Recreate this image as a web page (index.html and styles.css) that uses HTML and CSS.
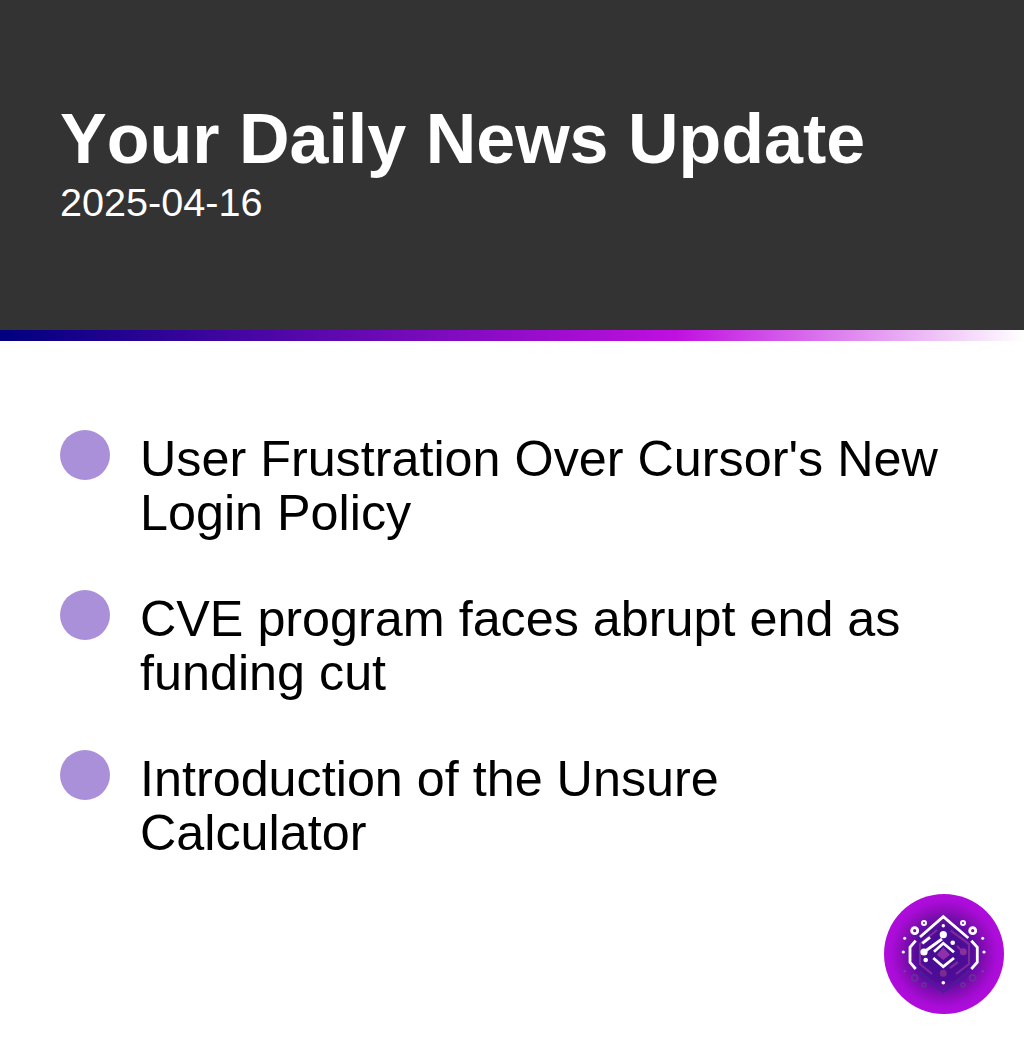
FILE: index.html
```html
<!DOCTYPE html>
<html lang="en">

<head>
    <meta charset="UTF-8">
    <title>Your Daily News Update</title>
    <link rel="stylesheet" href="styles.css">
</head>

<body>

    <header class="header">
        <h1>Your Daily News Update</h1>
        <p class="date">2025-04-16</p>
    </header>
    <div class="accent-bar"></div>

    <ul class="news-list">
        <li class="news-item">
            <span class="bullet"></span>
            <span class="news-text">User Frustration Over Cursor's New Login Policy</span>
        </li>
        <li class="news-item">
            <span class="bullet"></span>
            <span class="news-text">CVE program faces abrupt end as funding cut</span>
        </li>
        <li class="news-item">
            <span class="bullet"></span>
            <span class="news-text">Introduction of the Unsure Calculator</span>
        </li>
    </ul>

    <!-- Logo -->
    <svg class="logo" viewBox="0 0 120 120" aria-hidden="true">
        <defs>
            <radialGradient id="logoBg" cx="50%" cy="50%" r="50%">
                <stop offset="0" stop-color="#420c90"/>
                <stop offset="0.45" stop-color="#500c98"/>
                <stop offset="0.7" stop-color="#8a0cb8"/>
                <stop offset="0.88" stop-color="#aa0cd8"/>
                <stop offset="1" stop-color="#b00cdc"/>
            </radialGradient>
        </defs>
        <circle cx="60" cy="60" r="60" fill="url(#logoBg)"/>

        <!-- faint inner circuit -->
        <g fill="none" stroke="#7c2a9c" stroke-width="2.2">
            <path d="M66.7 36.7 L78.3 45 L85 50 V70 L72 80"/>
            <path d="M53 36 L36 50 V70 L48 80"/>
            <path d="M73 52 L79 58 M74 68 L66 74"/>
        </g>
        <path d="M59.3 53.3 L66 60.7 L59.3 66 L52.7 60.7 Z" fill="#8f30a8"/>
        <circle cx="79.3" cy="57.7" r="3.5" fill="#8a2f9e"/>
        <circle cx="59.3" cy="79.3" r="3.5" fill="#7a2a90"/>

        <!-- faded bottom part -->
        <g fill="none" stroke="#6a2c9c" stroke-width="1.8">
            <circle cx="30.7" cy="84" r="3"/>
            <circle cx="88.7" cy="84" r="3"/>
            <circle cx="40" cy="91" r="2"/>
            <circle cx="79" cy="91" r="2"/>
            <path d="M35 76.7 L59.3 98.3 L85 76.7" stroke="#4a1f96"/>
        </g>
        <circle cx="20.7" cy="77.3" r="1.3" fill="#7a3aa8"/>
        <circle cx="98.7" cy="77.3" r="1.3" fill="#7a3aa8"/>

        <!-- white strokes -->
        <g fill="none" stroke="#fff" stroke-width="2.8">
            <path d="M36 43 L59.3 22.7 L84.3 44"/>
            <path d="M38.3 49.3 L46 43.3"/>
            <path d="M31.7 46.7 L26 53.3 V68.3 L31.7 75"/>
            <path d="M87.3 46.7 L93.3 53.3 V68.3 L87.3 75"/>
            <path d="M40 58 L58 45"/>
            <path d="M50 57.7 L59.3 49.3 L70 58.3"/>
            <path d="M49.3 64 L59.3 72.7 L70 64"/>
            <circle cx="30.7" cy="36.7" r="3"/>
            <circle cx="88.7" cy="36.7" r="3"/>
            <circle cx="40" cy="29" r="2" stroke-width="2"/>
            <circle cx="79" cy="29" r="2" stroke-width="2"/>
        </g>
        <g fill="#fff">
            <circle cx="59.3" cy="40.7" r="3.6"/>
            <circle cx="40" cy="58" r="3.6"/>
            <circle cx="68.7" cy="48.7" r="2.3"/>
            <circle cx="41.7" cy="66" r="2.3"/>
            <circle cx="59.3" cy="31.7" r="1.7"/>
            <circle cx="59.3" cy="88.7" r="1.8"/>
            <circle cx="20.7" cy="44.3" r="1.5"/>
            <circle cx="98.7" cy="44.3" r="1.5"/>
            <circle cx="19.3" cy="58" r="1.6"/>
            <circle cx="100" cy="58" r="1.6"/>
        </g>
    </svg>

</body>

</html>
```

FILE: styles.css
```css
* {
    margin: 0;
    padding: 0;
    box-sizing: border-box;
    font-family: "Liberation Sans", Arial, sans-serif;
    font-kerning: none;
}

body {
    position: relative;
    height: 1064px;
    background: #fff;
    overflow: hidden;
}

/* Header */
.header {
    height: 330px;
    padding: 100px 60px 0;
    background: #333;
    color: #fff;
}

.header h1 {
    font-size: 70px;
    line-height: 79px;
    font-weight: bold;
}

.date {
    font-size: 39.6px;
    line-height: 46px;
}

.accent-bar {
    height: 11px;
    background: linear-gradient(to right, #000080, #c010e0 66%, #fff);
}

/* News list */
.news-list {
    list-style: none;
    padding: 89px 80px 0 60px;
}

.news-item {
    display: flex;
    gap: 30px;
    height: 160px;
}

.bullet {
    flex: none;
    width: 50px;
    height: 50px;
    border-radius: 50%;
    background: #aa90d8;
}

.news-text {
    font-size: 50.3px;
    line-height: 54px;
    color: #000;
    margin-top: 2px;
}

/* Logo */
.logo {
    position: absolute;
    left: 884px;
    top: 894px;
    width: 120px;
    height: 120px;
}
```
